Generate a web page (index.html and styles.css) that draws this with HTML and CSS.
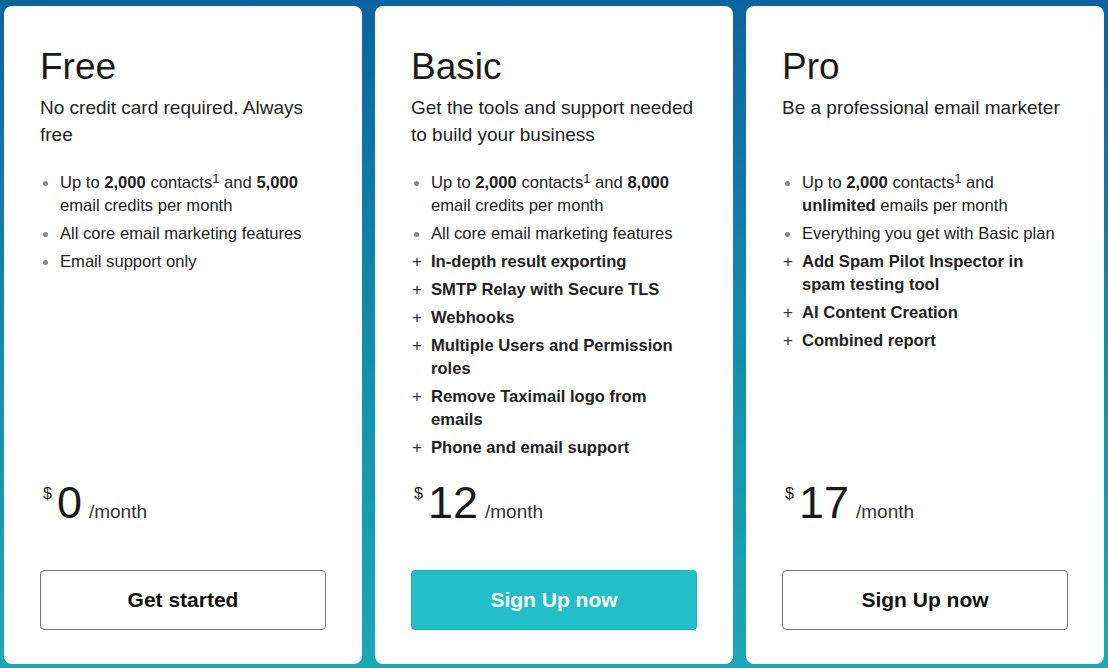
FILE: index.html
```html
<!DOCTYPE html>
<html lang="en">
<head>
<meta charset="utf-8">
<title>Pricing</title>
<link rel="stylesheet" href="styles.css">
</head>
<body>
<main class="plans">
  <section class="card">
    <h2 class="plan-name">Free</h2>
    <p class="plan-desc">No credit card required. Always free</p>
    <ul class="features">
      <li class="dot"><span>Up to <b>2,000</b> contacts<sup>1</sup> and <b>5,000</b> email credits per month</span></li>
      <li class="dot"><span>All core email marketing features</span></li>
      <li class="dot"><span>Email support only</span></li>
    </ul>
    <div class="price"><span class="cur">$</span><span class="amount">0</span><span class="per">/month</span></div>
    <a class="btn" href="#">Get started</a>
  </section>
  <section class="card">
    <h2 class="plan-name">Basic</h2>
    <p class="plan-desc">Get the tools and support needed to build your business</p>
    <ul class="features">
      <li class="dot"><span>Up to <b>2,000</b> contacts<sup>1</sup> and <b>8,000</b> email credits per month</span></li>
      <li class="dot"><span>All core email marketing features</span></li>
      <li class="plus"><b>In-depth result exporting</b></li>
      <li class="plus"><b>SMTP Relay with Secure TLS</b></li>
      <li class="plus"><b>Webhooks</b></li>
      <li class="plus"><b>Multiple Users and Permission roles</b></li>
      <li class="plus"><b>Remove Taximail logo from emails</b></li>
      <li class="plus"><b>Phone and email support</b></li>
    </ul>
    <div class="price"><span class="cur">$</span><span class="amount">12</span><span class="per">/month</span></div>
    <a class="btn btn-primary" href="#">Sign Up now</a>
  </section>
  <section class="card">
    <h2 class="plan-name">Pro</h2>
    <p class="plan-desc">Be a professional email marketer</p>
    <ul class="features">
      <li class="dot"><span>Up to <b>2,000</b> contacts<sup>1</sup> and <b>unlimited</b> emails per month</span></li>
      <li class="dot"><span>Everything you get with Basic plan</span></li>
      <li class="plus"><b>Add Spam Pilot Inspector in spam testing tool</b></li>
      <li class="plus"><b>AI Content Creation</b></li>
      <li class="plus"><b>Combined report</b></li>
    </ul>
    <div class="price"><span class="cur">$</span><span class="amount">17</span><span class="per">/month</span></div>
    <a class="btn" href="#">Sign Up now</a>
  </section>
</main>
</body>
</html>
```

FILE: styles.css
```css
html, body {
  margin: 0;
  height: 100%;
}

body {
  background: linear-gradient(180deg, #0b64a0 0%, #1390ad 55%, #1ba9b7 100%);
  font-family: "Liberation Sans", Arial, sans-serif;
  color: #222;
}

.plans {
  display: grid;
  grid-template-columns: repeat(3, 358px);
  gap: 13px;
  padding: 6px 4px 4px;
  height: 668px;
  box-sizing: border-box;
}

.card {
  background: #fff;
  border-radius: 8px;
  padding: 40px 36px 34px;
  display: flex;
  flex-direction: column;
}

.plan-name {
  margin: 0 0 7px;
  font-size: 37px;
  font-weight: 400;
  line-height: 41px;
  color: #1a1a1a;
}

.plan-desc {
  margin: 0;
  font-size: 19px;
  line-height: 27px;
  min-height: 54px;
  color: #222;
}

.features {
  list-style: none;
  margin: 23px 0 0;
  padding: 0;
  font-size: 16.6px;
  line-height: 23px;
  color: #222;
}

.features li {
  display: grid;
  grid-template-columns: 20px 1fr;
  margin-bottom: 5px;
}

.features li.dot::before {
  content: "";
  width: 5px;
  height: 5px;
  border-radius: 50%;
  background: #888;
  margin: 10px 0 0 3px;
}

.features li.plus::before {
  content: "+";
  font-weight: 400;
  font-size: 17px;
  color: #333;
  padding-left: 1px;
}

.features b {
  font-weight: 700;
}

.features sup {
  font-size: 13px;
  line-height: 0;
  vertical-align: 5px;
}

.price {
  margin-top: auto;
  display: flex;
  align-items: baseline;
  font-size: 45px;
  line-height: 45px;
  color: #1a1a1a;
}

.cur {
  align-self: flex-start;
  font-size: 16px;
  line-height: 16px;
  margin: 6px 5px 0 3px;
}

.per {
  font-size: 19px;
  margin-left: 7px;
  color: #333;
}

.btn {
  margin-top: 36px;
  height: 60px;
  box-sizing: border-box;
  display: flex;
  align-items: center;
  justify-content: center;
  border: 1px solid #777;
  border-radius: 4px;
  font-size: 21px;
  font-weight: 700;
  color: #111;
  text-decoration: none;
  background: #fff;
}

.btn-primary {
  background: #21c0c8;
  border-color: #1bb3bb;
  color: #fff;
}
```
